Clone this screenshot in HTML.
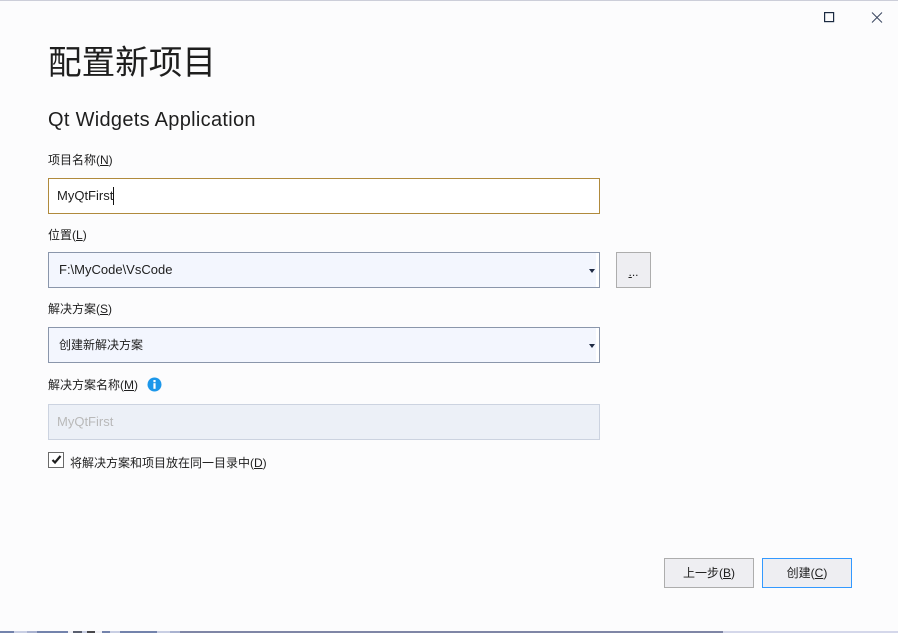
<!DOCTYPE html>
<html><head><meta charset="utf-8">
<style>
html,body{margin:0;padding:0}
body{width:898px;height:633px;position:relative;overflow:hidden;background:#fcfcfd;font-family:"Liberation Sans","Noto Sans CJK SC",sans-serif;color:#1e1e1e}
.a{position:absolute;white-space:nowrap}
.l{font-size:12px;line-height:16px;left:48px;color:#1e1e1e}
u{text-underline-offset:1px}
.b{position:absolute;box-sizing:border-box;left:48px;width:552px;height:36px;border:1px solid #8a96ab;font-size:12px;line-height:34px}
.f{position:absolute;left:0;top:0;bottom:0;width:537px;background:#f3f6fe;padding-left:10px}
.arr{position:absolute;left:540px;top:16px;width:0;height:0;border-left:3.5px solid transparent;border-right:3.5px solid transparent;border-top:4px solid #1f2a44}
.btn{position:absolute;box-sizing:border-box;background:#eeeef2;border:1px solid #adadad;text-align:center;font-size:12px}
.s{position:absolute;top:631px;height:2px}
</style></head>
<body>
<div class="a" style="left:0;top:0;width:898px;height:1px;background:#ccced9"></div>
<svg class="a" style="left:820px;top:8px" width="70" height="20" viewBox="0 0 70 20">
<rect x="4.6" y="4.6" width="9" height="9" fill="none" stroke="#1b2a41" stroke-width="1.2"/>
<path d="M52 4.5L62 14.5M62 4.5L52 14.5" stroke="#3a4560" stroke-width="1" fill="none"/>
</svg>
<div class="a" style="left:48px;top:40px;font-size:33.6px;line-height:48px;color:#1e1e1e">配置新项目</div>
<div class="a" style="left:48px;top:107px;font-size:20px;line-height:26px;letter-spacing:.3px;color:#1e1e1e">Qt Widgets Application</div>

<div class="a l" style="top:152px">项目名称(<u>N</u>)</div>
<div class="a" style="box-sizing:border-box;left:48px;top:178px;width:552px;height:36px;border:1px solid #b08a3c;background:#fff;font-size:13px;line-height:34px;padding-left:8px">MyQtFirst</div>
<div class="a" style="left:113px;top:187px;width:1px;height:18px;background:#111"></div>

<div class="a l" style="top:227px">位置(<u>L</u>)</div>
<div class="b" style="top:252px;background:#fff"><div class="f" style="font-size:13px">F:\MyCode\VsCode</div><div class="arr"></div></div>
<div class="btn" style="left:616px;top:252px;width:35px;height:36px;line-height:38px"><u>.</u>..</div>

<div class="a l" style="top:301px">解决方案(<u>S</u>)</div>
<div class="b" style="top:327px;background:#fff"><div class="f">创建新解决方案</div><div class="arr"></div></div>

<div class="a l" style="top:377px">解决方案名称(<u>M</u>)</div>
<svg class="a" style="left:147px;top:377px" width="15" height="15" viewBox="0 0 15 15">
<circle cx="7.5" cy="7.5" r="7" fill="#1c97ea"/>
<rect x="6.4" y="3" width="2.2" height="2.2" fill="#fff"/>
<rect x="6.4" y="6.2" width="2.2" height="5.6" fill="#fff"/>
</svg>
<div class="a" style="box-sizing:border-box;left:48px;top:404px;width:552px;height:36px;border:1px solid #ccd3e0;background:#ecf0f7;color:#b9b9b9;font-size:13px;line-height:34px;padding-left:8px">MyQtFirst</div>

<div class="a" style="box-sizing:border-box;left:48px;top:452px;width:16px;height:16px;border:1px solid #6a6a6a;background:#fff"></div>
<svg class="a" style="left:48px;top:452px" width="16" height="16" viewBox="0 0 16 16">
<path d="M4.5 8L7 10.5L12.5 4" fill="none" stroke="#1e1e1e" stroke-width="2.2"/>
</svg>
<div class="a l" style="left:70px;top:455px">将解决方案和项目放在同一目录中(<u>D</u>)</div>

<div class="btn" style="left:664px;top:558px;width:90px;height:30px;line-height:28px">上一步(<u>B</u>)</div>
<div class="btn" style="left:762px;top:558px;width:90px;height:30px;line-height:28px;border-color:#3399ff">创建(<u>C</u>)</div>

<div class="s" style="left:0;width:14px;background:#7383ac"></div>
<div class="s" style="left:14px;width:13px;background:#c9cfe4"></div>
<div class="s" style="left:27px;width:10px;background:#a9b2d0"></div>
<div class="s" style="left:37px;width:31px;background:#7383ac"></div>
<div class="s" style="left:68px;width:5px;background:#f0f0f6"></div>
<div class="s" style="left:73px;width:9px;background:#5a6070"></div>
<div class="s" style="left:82px;width:5px;background:#c9cfe4"></div>
<div class="s" style="left:87px;width:8px;background:#48484c"></div>
<div class="s" style="left:95px;width:7px;background:#f0f0f6"></div>
<div class="s" style="left:102px;width:8px;background:#7383ac"></div>
<div class="s" style="left:110px;width:10px;background:#c9cfe4"></div>
<div class="s" style="left:120px;width:37px;background:#7383ac"></div>
<div class="s" style="left:157px;width:13px;background:#c9cfe4"></div>
<div class="s" style="left:170px;width:10px;background:#a9b2d0"></div>
<div class="s" style="left:180px;width:543px;background:#7f86a6"></div>
<div class="s" style="left:723px;width:175px;background:#d4d7ea"></div>
</body></html>
